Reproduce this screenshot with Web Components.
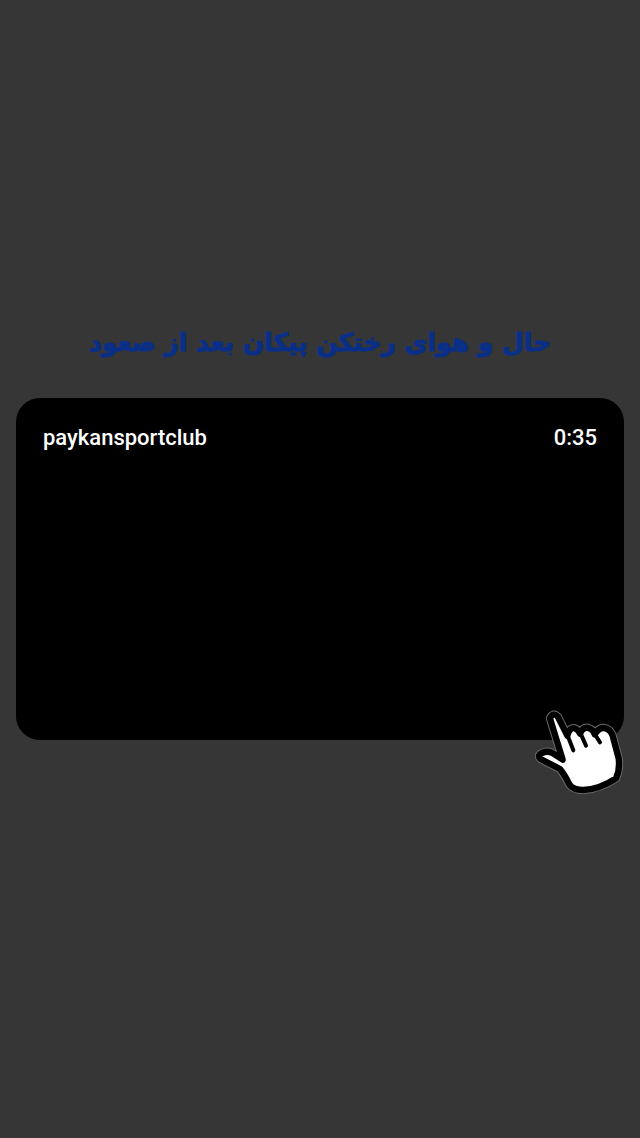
<!DOCTYPE html>
<html lang="fa">
<head>
  <meta charset="UTF-8" />
  <title>paykansportclub</title>
  <style>
    html, body { margin: 0; height: 100%; background: #363636; }
  </style>
</head>
<body>
  <story-screen>
    <story-title>حال و هوای رختکن پیکان بعد از صعود</story-title>
    <video-card user="paykansportclub" time="0:35"></video-card>
  </story-screen>

  <script>
    class StoryScreen extends HTMLElement {
      constructor() {
        super();
        this.attachShadow({ mode: 'open' });
        this.shadowRoot.innerHTML = `
          <style>
            :host {
              display: flex;
              flex-direction: column;
              box-sizing: border-box;
              height: 1138px;
              padding: 324px 16px 0;
              gap: 22px;
              background: #363636;
            }
          </style>
          <slot></slot>
        `;
      }
    }

    class StoryTitle extends HTMLElement {
      constructor() {
        super();
        this.attachShadow({ mode: 'open' });
        this.shadowRoot.innerHTML = `
          <style>
            :host {
              display: block;
              height: 52px;
              line-height: 38px;
              text-align: center;
              direction: rtl;
              white-space: nowrap;
              font: 700 25px/38px "DejaVu Sans", "Noto Sans", sans-serif;
              color: #0a2f86;
              -webkit-text-stroke: 1px #0a2f86;
            }
          </style>
          <slot></slot>
        `;
      }
    }

    class VideoCard extends HTMLElement {
      constructor() {
        super();
        this.attachShadow({ mode: 'open' });
      }

      connectedCallback() {
        const user = this.getAttribute('user') || '';
        const time = this.getAttribute('time') || '';
        this.shadowRoot.innerHTML = `
          <style>
            :host {
              display: block;
              position: relative;
              height: 342px;
            }
            .box {
              height: 100%;
              box-sizing: border-box;
              padding: 27px 27px 0;
              background: #000;
              border-radius: 24px;
              display: flex;
              justify-content: space-between;
              align-items: flex-start;
              font: 500 22px/26px Roboto, "Liberation Sans", sans-serif;
              color: #fff;
            }
            .hand {
              position: absolute;
              left: 504px;
              top: 297px;
              width: 120px;
              height: 110px;
            }
          </style>
          <div class="box">
            <span>${user}</span>
            <span>${time}</span>
          </div>
          <svg class="hand" viewBox="0 0 360 330" fill="none" stroke-linejoin="round" stroke-linecap="round">
            <path id="h" d="M90 70 Q100 50 114 66 L142 122 Q150 92 168 102 Q176 106 180 116 Q192 90 212 102 Q220 106 224 118 Q240 92 262 102 Q276 110 280 130 L296 190 Q300 225 288 250 Q240 282 190 285 Q160 285 148 268 Q135 240 120 222 L62 192 Q50 182 66 174 Q84 166 100 176 L128 194 Z" stroke="#6a6a6a" stroke-width="25"/>
            <path d="M90 70 Q100 50 114 66 L142 122 Q150 92 168 102 Q176 106 180 116 Q192 90 212 102 Q220 106 224 118 Q240 92 262 102 Q276 110 280 130 L296 190 Q300 225 288 250 Q240 282 190 285 Q160 285 148 268 Q135 240 120 222 L62 192 Q50 182 66 174 Q84 166 100 176 L128 194 Z" fill="#fff" stroke="#000" stroke-width="19"/>
            <path d="M143 122 L160 166 M183 118 L198 152 M226 120 L240 142" stroke="#000" stroke-width="12"/>
          </svg>
        `;
      }
    }

    customElements.define('story-screen', StoryScreen);
    customElements.define('story-title', StoryTitle);
    customElements.define('video-card', VideoCard);
  </script>
</body>
</html>
